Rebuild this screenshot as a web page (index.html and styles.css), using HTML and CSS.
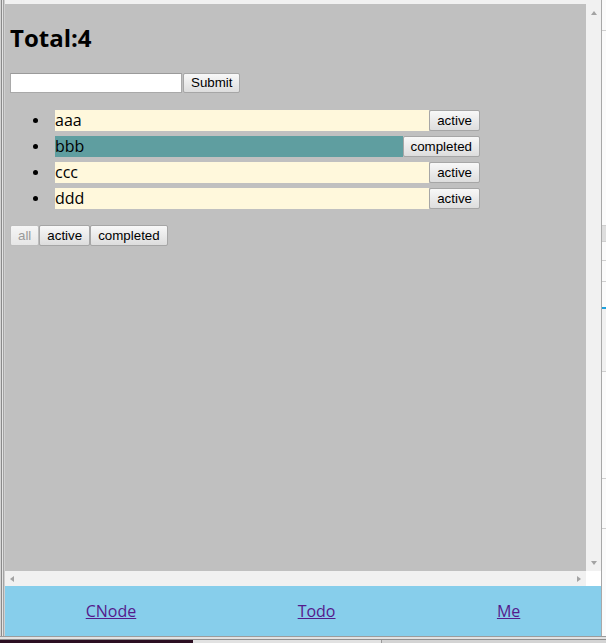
FILE: index.html
```html
<!DOCTYPE html>
<html>
<head>
<meta charset="utf-8">
<title>Todo</title>
<link rel="stylesheet" href="styles.css">
</head>
<body>
<div class="win">
  <div class="frame-l"></div>
  <div class="win-main">
    <div class="topstrip"></div>
    <div class="viewport">
      <div class="page">
        <h2 class="total">Total:4</h2>
        <form class="add">
          <input class="add-input" type="text">
          <button class="btn btn-submit" type="button">Submit</button>
        </form>
        <ul class="todos">
          <li class="todo"><div class="row"><span class="txt">aaa</span><button class="btn btn-row" type="button">active</button></div></li>
          <li class="todo"><div class="row"><span class="txt done">bbb</span><button class="btn btn-row" type="button">completed</button></div></li>
          <li class="todo"><div class="row"><span class="txt">ccc</span><button class="btn btn-row" type="button">active</button></div></li>
          <li class="todo"><div class="row"><span class="txt">ddd</span><button class="btn btn-row" type="button">active</button></div></li>
        </ul>
        <div class="filters">
          <button class="btn btn-filter" type="button" disabled>all</button>
          <button class="btn btn-filter" type="button">active</button>
          <button class="btn btn-filter" type="button">completed</button>
        </div>
      </div>
      <div class="vscroll">
        <span class="arr arr-up"></span>
        <span class="arr arr-down"></span>
      </div>
    </div>
    <div class="hbar">
      <div class="hscroll">
        <span class="arr arr-left"></span>
        <span class="arr arr-right"></span>
      </div>
      <div class="corner"></div>
    </div>
    <footer class="nav">
      <a class="nav-link" href="#">CNode</a>
      <a class="nav-link" href="#">Todo</a>
      <a class="nav-link" href="#">Me</a>
    </footer>
  </div>
  <div class="side">
    <div class="s s1"></div>
    <div class="s s2"></div>
    <div class="s s3"></div>
    <div class="s s4"></div>
    <div class="s s5"></div>
    <div class="s s6"></div>
    <div class="s s7"></div>
    <div class="s s8"></div>
    <div class="s s9"></div>
  </div>
</div>
<div class="wbottom"></div>
<div class="taskbar">
  <div class="tb-dark"></div>
  <div class="tb-a"></div>
  <div class="tb-b"></div>
</div>
</body>
</html>
```

FILE: styles.css
```css
html, body {
  margin: 0;
  padding: 0;
}
body {
  width: 606px;
  height: 643px;
  overflow: hidden;
  background: #efefef;
  display: flex;
  flex-direction: column;
  font-family: "Open Sans", "Noto Sans", sans-serif;
}
.win {
  display: flex;
  height: 636px;
}
.frame-l {
  width: 5px;
  flex: none;
  background: linear-gradient(to right, #d4d4d4 0 1px, #8a8a8a 1px 2px, #e4e4e4 2px 3px, #a4a4a4 3px 4px, #cfcfcf 4px 5px);
}
.win-main {
  width: 596px;
  flex: none;
  display: flex;
  flex-direction: column;
}
.topstrip {
  height: 4px;
  background: #f1f1f1;
}
.viewport {
  height: 567px;
  display: flex;
}
.page {
  width: 581px;
  box-sizing: border-box;
  background: #c0c0c0;
  padding: 0 5px;
}
.total {
  margin: 18px 0 0;
  font-size: 24px;
  line-height: 32px;
  font-weight: 700;
  color: #000;
}
.add {
  margin: 19px 0 0;
  display: flex;
  height: 20px;
}
.add-input {
  width: 172px;
  height: 20px;
  box-sizing: border-box;
  margin: 0 1px 0 0;
  border: 1px solid #a9a9a9;
  border-top-color: #9a9a9a;
  background: #fff;
  padding: 0 2px;
}
.btn {
  font-family: "Liberation Sans", Arial, sans-serif;
  font-size: 13.33px;
  color: #000;
  margin: 0;
  padding: 0 7px;
  box-sizing: border-box;
  border: 1px solid #a6a6a6;
  border-radius: 2px;
  background: linear-gradient(#f8f8f8, #dddddd);
  line-height: 1;
}
.btn:disabled {
  color: #9a9a9a;
  background: linear-gradient(#f6f6f6, #e6e6e6);
  border-color: #bdbdbd;
}
.btn-submit {
  height: 20px;
}
.todos {
  margin: 17px 0 16px;
  padding: 0 0 0 45px;
  list-style: none;
  font-size: 16px;
  color: #000;
}
.todo {
  margin: 0 0 5px;
  display: flex;
  align-items: center;
  height: 21px;
  line-height: 21px;
}
.todo::before {
  content: "";
  flex: none;
  width: 5px;
  height: 5px;
  border-radius: 50%;
  background: #000;
  margin: 0 17px 0 -22px;
}
.todo:last-child {
  margin-bottom: 0;
}
.row {
  display: flex;
  width: 425px;
  height: 21px;
}
.txt {
  flex: 1;
  background: #fff8dc;
  line-height: 21px;
  height: 21px;
  font-size: 16px;
  overflow: hidden;
}
.txt.done {
  background: #5f9ea0;
}
.btn-row {
  height: 21px;
}
.filters {
  display: flex;
  height: 21px;
}
.btn-filter {
  height: 21px;
}
.vscroll {
  width: 15px;
  flex: none;
  background: #f1f1f1;
  display: flex;
  flex-direction: column;
  justify-content: space-between;
  align-items: center;
  padding: 7px 0 6px;
  box-sizing: border-box;
}
.arr {
  width: 0;
  height: 0;
  display: block;
}
.arr-up {
  border-left: 3.5px solid transparent;
  border-right: 3.5px solid transparent;
  border-bottom: 4px solid #a3a3a3;
}
.arr-down {
  border-left: 3.5px solid transparent;
  border-right: 3.5px solid transparent;
  border-top: 4px solid #a3a3a3;
}
.hbar {
  height: 15px;
  display: flex;
}
.hscroll {
  width: 581px;
  background: #f1f1f1;
  display: flex;
  justify-content: space-between;
  align-items: center;
  padding: 0 5px;
  box-sizing: border-box;
}
.arr-left {
  border-top: 3.5px solid transparent;
  border-bottom: 3.5px solid transparent;
  border-right: 4px solid #a3a3a3;
}
.arr-right {
  border-top: 3.5px solid transparent;
  border-bottom: 3.5px solid transparent;
  border-left: 4px solid #a3a3a3;
}
.corner {
  width: 15px;
  background: #fff;
}
.nav {
  height: 50px;
  background: #87ceeb;
  display: flex;
  justify-content: space-around;
  align-items: center;
}
.nav-link {
  color: #551a8b;
  font-size: 16px;
  text-decoration: underline;
}
.side {
  width: 5px;
  flex: none;
  border-left: 1px solid #a8a8a8;
  box-sizing: border-box;
  background: #fbfbfb;
  display: flex;
  flex-direction: column;
}
.s {
  flex: none;
  border-bottom: 1px solid #cfcfcf;
}
.s1 { height: 30px; }
.s2 { height: 194px; }
.s3 { height: 15px; background: #dedede; }
.s4 { height: 18px; }
.s5 { height: 20px; }
.s6 { height: 25px; border-bottom: 2px solid #1ea0dc; }
.s7 { height: 62px; background: #f1f1f1; }
.s8 { height: 106px; }
.s9 { height: 49px; }
.wbottom {
  height: 4px;
  background: linear-gradient(#9c9c9c 0 1px, #e2e2e2 1px 3px, #8f8f8f 3px 4px);
}
.taskbar {
  height: 3px;
  display: flex;
}
.tb-dark {
  width: 193px;
  background: #2c0f22;
}
.tb-a {
  width: 188px;
  background: #e2e2e2;
  border-right: 1px solid #9a9a9a;
}
.tb-b {
  flex: 1;
  background: #d4d4d4;
}
```
